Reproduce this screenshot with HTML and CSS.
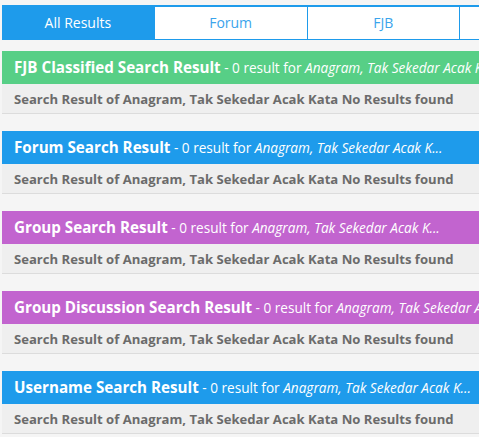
FILE: index.html
```html
<!DOCTYPE html>
<html lang="en">
<head>
    <meta charset="UTF-8">
    <title>Search Results</title>
    <link rel="stylesheet" href="styles.css">
</head>
<body>
    <div class="page">
        <div class="tabs">
            <a class="tab active" href="#">All Results</a>
            <a class="tab" href="#">Forum</a>
            <a class="tab" href="#">FJB</a>
            <a class="tab" href="#">Group</a>
        </div>

        <div class="result">
            <div class="result-head green">
                <b>FJB Classified Search Result</b> - 0 result for <i>Anagram, Tak Sekedar Acak K...</i>
            </div>
            <div class="result-body">Search Result of Anagram, Tak Sekedar Acak Kata No Results found</div>
        </div>

        <div class="result">
            <div class="result-head blue">
                <b>Forum Search Result</b> - 0 result for <i>Anagram, Tak Sekedar Acak K...</i>
            </div>
            <div class="result-body">Search Result of Anagram, Tak Sekedar Acak Kata No Results found</div>
        </div>

        <div class="result">
            <div class="result-head purple">
                <b>Group Search Result</b> - 0 result for <i>Anagram, Tak Sekedar Acak K...</i>
            </div>
            <div class="result-body">Search Result of Anagram, Tak Sekedar Acak Kata No Results found</div>
        </div>

        <div class="result">
            <div class="result-head purple">
                <b>Group Discussion Search Result</b> - 0 result for <i>Anagram, Tak Sekedar Acak K...</i>
            </div>
            <div class="result-body">Search Result of Anagram, Tak Sekedar Acak Kata No Results found</div>
        </div>

        <div class="result">
            <div class="result-head blue">
                <b>Username Search Result</b> - 0 result for <i>Anagram, Tak Sekedar Acak K...</i>
            </div>
            <div class="result-body">Search Result of Anagram, Tak Sekedar Acak Kata No Results found</div>
        </div>
    </div>
</body>
</html>
```

FILE: styles.css
```css
html, body {
    margin: 0;
    padding: 0;
    background: #f5f5f5;
    overflow: hidden;
}

body {
    font-family: "Open Sans", Arial, sans-serif;
    color: #666;
}

.page {
    width: 610px;
    padding: 5px 0 0 2px;
}

.tabs {
    display: flex;
    border-top: 2px solid #1e9beb;
    border-bottom: 1px solid #1e9beb;
    margin-bottom: 11px;
}

.tab {
    flex: 1;
    height: 32px;
    line-height: 32px;
    text-align: center;
    font-size: 14px;
    color: #3aa4ec;
    background: #fff;
    text-decoration: none;
    border-left: 1px solid #1e9beb;
}

.tab.active {
    background: #1e9beb;
    color: #fff;
    border-left: none;
}

.result {
    margin-bottom: 17px;
}

.result-head {
    height: 33px;
    line-height: 32px;
    padding-left: 12px;
    color: #fff;
    font-size: 13.6px;
    white-space: nowrap;
    overflow: hidden;
}

.result-head b {
    font-size: 15.2px;
}

.green {
    background: #57cf86;
}

.blue {
    background: #1e9beb;
}

.purple {
    background: #c264cf;
}

.result-body {
    height: 29px;
    line-height: 30px;
    padding-left: 12px;
    background: #efefef;
    border-bottom: 1px solid #dcdcdc;
    font-size: 13.1px;
    font-weight: bold;
    color: #6b6b6b;
    white-space: nowrap;
}
```
